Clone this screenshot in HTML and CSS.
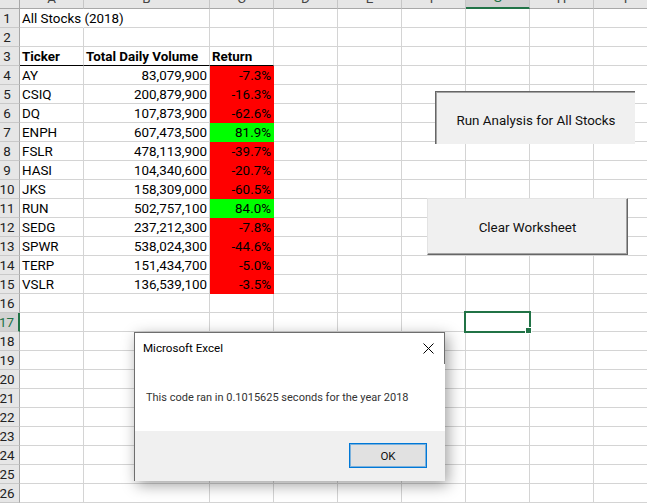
FILE: index.html
```html
<!DOCTYPE html>
<html>
<head>
<meta charset="utf-8">
<link rel="stylesheet" href="styles.css">
</head>
<body>
<div class="sheet">
  <div class="ch corner"></div><div class="ch"><span>A</span></div><div class="ch"><span>B</span></div><div class="ch"><span>C</span></div><div class="ch"><span>D</span></div><div class="ch"><span>E</span></div><div class="ch"><span>F</span></div><div class="ch sel"><span>G</span></div><div class="ch"><span>H</span></div><div class="ch"><span>I</span></div>

  <div class="rh">1</div><div class="c nb">All Stocks (2018)</div><div class="c"></div><div class="c"></div><div class="c"></div><div class="c"></div><div class="c"></div><div class="c"></div><div class="c"></div><div class="c"></div>
  <div class="rh">2</div><div class="c"></div><div class="c"></div><div class="c"></div><div class="c"></div><div class="c"></div><div class="c"></div><div class="c"></div><div class="c"></div><div class="c"></div>
  <div class="rh">3</div><div class="c b bb">Ticker</div><div class="c b bb">Total Daily Volume</div><div class="c b bb">Return</div><div class="c"></div><div class="c"></div><div class="c"></div><div class="c"></div><div class="c"></div><div class="c"></div>
  <div class="rh">4</div><div class="c">AY</div><div class="c r">83,079,900</div><div class="c r red">-7.3%</div><div class="c"></div><div class="c"></div><div class="c"></div><div class="c"></div><div class="c"></div><div class="c"></div>
  <div class="rh">5</div><div class="c">CSIQ</div><div class="c r">200,879,900</div><div class="c r red">-16.3%</div><div class="c"></div><div class="c"></div><div class="c"></div><div class="c"></div><div class="c"></div><div class="c"></div>
  <div class="rh">6</div><div class="c">DQ</div><div class="c r">107,873,900</div><div class="c r red">-62.6%</div><div class="c"></div><div class="c"></div><div class="c"></div><div class="c"></div><div class="c"></div><div class="c"></div>
  <div class="rh">7</div><div class="c">ENPH</div><div class="c r">607,473,500</div><div class="c r grn">81.9%</div><div class="c"></div><div class="c"></div><div class="c"></div><div class="c"></div><div class="c"></div><div class="c"></div>
  <div class="rh">8</div><div class="c">FSLR</div><div class="c r">478,113,900</div><div class="c r red">-39.7%</div><div class="c"></div><div class="c"></div><div class="c"></div><div class="c"></div><div class="c"></div><div class="c"></div>
  <div class="rh">9</div><div class="c">HASI</div><div class="c r">104,340,600</div><div class="c r red">-20.7%</div><div class="c"></div><div class="c"></div><div class="c"></div><div class="c"></div><div class="c"></div><div class="c"></div>
  <div class="rh">10</div><div class="c">JKS</div><div class="c r">158,309,000</div><div class="c r red">-60.5%</div><div class="c"></div><div class="c"></div><div class="c"></div><div class="c"></div><div class="c"></div><div class="c"></div>
  <div class="rh">11</div><div class="c">RUN</div><div class="c r">502,757,100</div><div class="c r grn">84.0%</div><div class="c"></div><div class="c"></div><div class="c"></div><div class="c"></div><div class="c"></div><div class="c"></div>
  <div class="rh">12</div><div class="c">SEDG</div><div class="c r">237,212,300</div><div class="c r red">-7.8%</div><div class="c"></div><div class="c"></div><div class="c"></div><div class="c"></div><div class="c"></div><div class="c"></div>
  <div class="rh">13</div><div class="c">SPWR</div><div class="c r">538,024,300</div><div class="c r red">-44.6%</div><div class="c"></div><div class="c"></div><div class="c"></div><div class="c"></div><div class="c"></div><div class="c"></div>
  <div class="rh">14</div><div class="c">TERP</div><div class="c r">151,434,700</div><div class="c r red">-5.0%</div><div class="c"></div><div class="c"></div><div class="c"></div><div class="c"></div><div class="c"></div><div class="c"></div>
  <div class="rh">15</div><div class="c">VSLR</div><div class="c r">136,539,100</div><div class="c r red">-3.5%</div><div class="c"></div><div class="c"></div><div class="c"></div><div class="c"></div><div class="c"></div><div class="c"></div>
  <div class="rh">16</div><div class="c"></div><div class="c"></div><div class="c"></div><div class="c"></div><div class="c"></div><div class="c"></div><div class="c"></div><div class="c"></div><div class="c"></div>
  <div class="rh sel">17</div><div class="c"></div><div class="c"></div><div class="c"></div><div class="c"></div><div class="c"></div><div class="c"></div><div class="c"></div><div class="c"></div><div class="c"></div>
  <div class="rh">18</div><div class="c"></div><div class="c"></div><div class="c"></div><div class="c"></div><div class="c"></div><div class="c"></div><div class="c"></div><div class="c"></div><div class="c"></div>
  <div class="rh">19</div><div class="c"></div><div class="c"></div><div class="c"></div><div class="c"></div><div class="c"></div><div class="c"></div><div class="c"></div><div class="c"></div><div class="c"></div>
  <div class="rh">20</div><div class="c"></div><div class="c"></div><div class="c"></div><div class="c"></div><div class="c"></div><div class="c"></div><div class="c"></div><div class="c"></div><div class="c"></div>
  <div class="rh">21</div><div class="c"></div><div class="c"></div><div class="c"></div><div class="c"></div><div class="c"></div><div class="c"></div><div class="c"></div><div class="c"></div><div class="c"></div>
  <div class="rh">22</div><div class="c"></div><div class="c"></div><div class="c"></div><div class="c"></div><div class="c"></div><div class="c"></div><div class="c"></div><div class="c"></div><div class="c"></div>
  <div class="rh">23</div><div class="c"></div><div class="c"></div><div class="c"></div><div class="c"></div><div class="c"></div><div class="c"></div><div class="c"></div><div class="c"></div><div class="c"></div>
  <div class="rh">24</div><div class="c"></div><div class="c"></div><div class="c"></div><div class="c"></div><div class="c"></div><div class="c"></div><div class="c"></div><div class="c"></div><div class="c"></div>
  <div class="rh">25</div><div class="c"></div><div class="c"></div><div class="c"></div><div class="c"></div><div class="c"></div><div class="c"></div><div class="c"></div><div class="c"></div><div class="c"></div>
  <div class="rh">26</div><div class="c"></div><div class="c"></div><div class="c"></div><div class="c"></div><div class="c"></div><div class="c"></div><div class="c"></div><div class="c"></div><div class="c"></div>

  <div class="selbox"><div class="handle"></div></div>

  <div class="btn btn-run">Run Analysis for All Stocks</div>
  <div class="btn btn-clear">Clear Worksheet</div>

  <div class="dlg">
    <div class="dlg-main">
      <div class="dlg-title">Microsoft Excel</div>
      <svg class="dlg-close" width="11" height="11" viewBox="0 0 11 11"><path d="M0.5 0.5L10.5 10.5M10.5 0.5L0.5 10.5" stroke="#000" stroke-width="1" fill="none"/></svg>
      <div class="dlg-msg">This code ran in 0.1015625 seconds for the year 2018</div>
    </div>
    <div class="dlg-foot">
      <div class="ok">OK</div>
    </div>
  </div>
</div>
</body>
</html>
```
FILE: styles.css
```css
* { box-sizing: border-box; margin: 0; padding: 0; }
html, body { width: 647px; height: 503px; overflow: hidden; background: #fff; }
body { font-family: Roboto, "Liberation Sans", sans-serif; font-size: 13.4px; color: #000; }

.sheet {
  position: relative;
  display: grid;
  grid-template-columns: 20px 64px 126px repeat(7, 64px);
  grid-template-rows: 9px repeat(26, 19px);
  width: 658px;
}

.ch {
  display: flex;
  align-items: flex-end;
  justify-content: center;
  overflow: hidden;
  background: #e6e6e6;
  border-right: 1px solid #c6c6c6;
  border-bottom: 1px solid #a8a8a8;
  color: #444;
  line-height: 18px;
}
.ch span { display: block; }
.ch.corner { border-right-color: #a8a8a8; }
.ch.sel { background: #d2d2d2; border-bottom: 2px solid #217346; color: #217346; }

.rh {
  display: flex;
  justify-content: center;
  background: #e6e6e6;
  border-right: 1px solid #a8a8a8;
  border-bottom: 1px solid #c9c9c9;
  color: #222;
  line-height: 19px;
  padding-right: 5px;
  white-space: nowrap;
}
.rh.sel { background: #d2d2d2; border-right: 2px solid #217346; color: #217346; }

.c {
  border-right: 1px solid #d4d4d4;
  border-bottom: 1px solid #d4d4d4;
  line-height: 19px;
  padding: 0 2px;
  white-space: nowrap;
}
.c.nb { border-right-color: transparent; }
.r { text-align: right; }
.b { font-weight: 700; }
.bb { border-bottom-color: #000; }
.red { background: #ff0000; border-color: #ff0000; }
.grn { background: #00ff00; border-color: #00ff00; }

.selbox {
  position: absolute;
  left: 464px;
  top: 311px;
  width: 67px;
  height: 22px;
  border: 2px solid #217346;
}
.handle {
  position: absolute;
  left: 59px;
  top: 14px;
  width: 7px;
  height: 7px;
  background: #217346;
  border: 1px solid #fff;
}

.btn {
  position: absolute;
  display: flex;
  align-items: center;
  justify-content: center;
  background: #f0f0f0;
  color: #111;
  white-space: nowrap;
}
.btn-run {
  left: 435px;
  top: 91px;
  width: 200px;
  height: 53px;
  border-top: 1px solid #666;
  border-left: 1px solid #666;
  box-shadow: inset 1px 1px 0 #a3a3a3;
  padding-top: 4px;
  padding-left: 1px;
}
.btn-clear {
  left: 427px;
  top: 198px;
  width: 201px;
  height: 57px;
  border: 1px solid;
  border-color: #e3e3e3 #666 #666 #e3e3e3;
  box-shadow: inset -1px -1px 0 #a3a3a3;
  padding-top: 1px;
}

.dlg {
  position: absolute;
  left: 134px;
  top: 332px;
  width: 311px;
  height: 149px;
  background: #fff;
  border-left: 1px solid #6e6e6e;
  border-top: 1px solid #6e6e6e;
  box-shadow: 3px 4px 14px rgba(0, 0, 0, 0.38);
  font-size: 11px;
  display: flex;
  flex-direction: column;
}
.dlg::after {
  content: "";
  position: absolute;
  right: 0;
  top: 0;
  width: 1px;
  height: 31px;
  background: #6e6e6e;
}
.dlg-main { position: relative; height: 98px; }
.dlg-title { padding: 8px 0 0 8px; line-height: 14px; color: #000; font-size: 11.6px; }
.dlg-close { position: absolute; left: 288px; top: 10px; }
.dlg-msg { padding: 36px 0 0 11px; line-height: 14px; color: #333; }
.dlg-foot {
  flex: 1;
  background: #f0f0f0;
  display: flex;
  justify-content: flex-end;
  align-items: flex-start;
  padding: 12px 18px 0 0;
}
.ok {
  width: 78px;
  height: 25px;
  background: #e1e1e1;
  border: 1px solid #0078d7;
  box-shadow: inset 0 0 0 1px rgba(0, 120, 215, 0.45);
  display: flex;
  align-items: center;
  justify-content: center;
  line-height: 14px;
  color: #111;
  padding-top: 1px;
  font-size: 11.5px;
}
```
